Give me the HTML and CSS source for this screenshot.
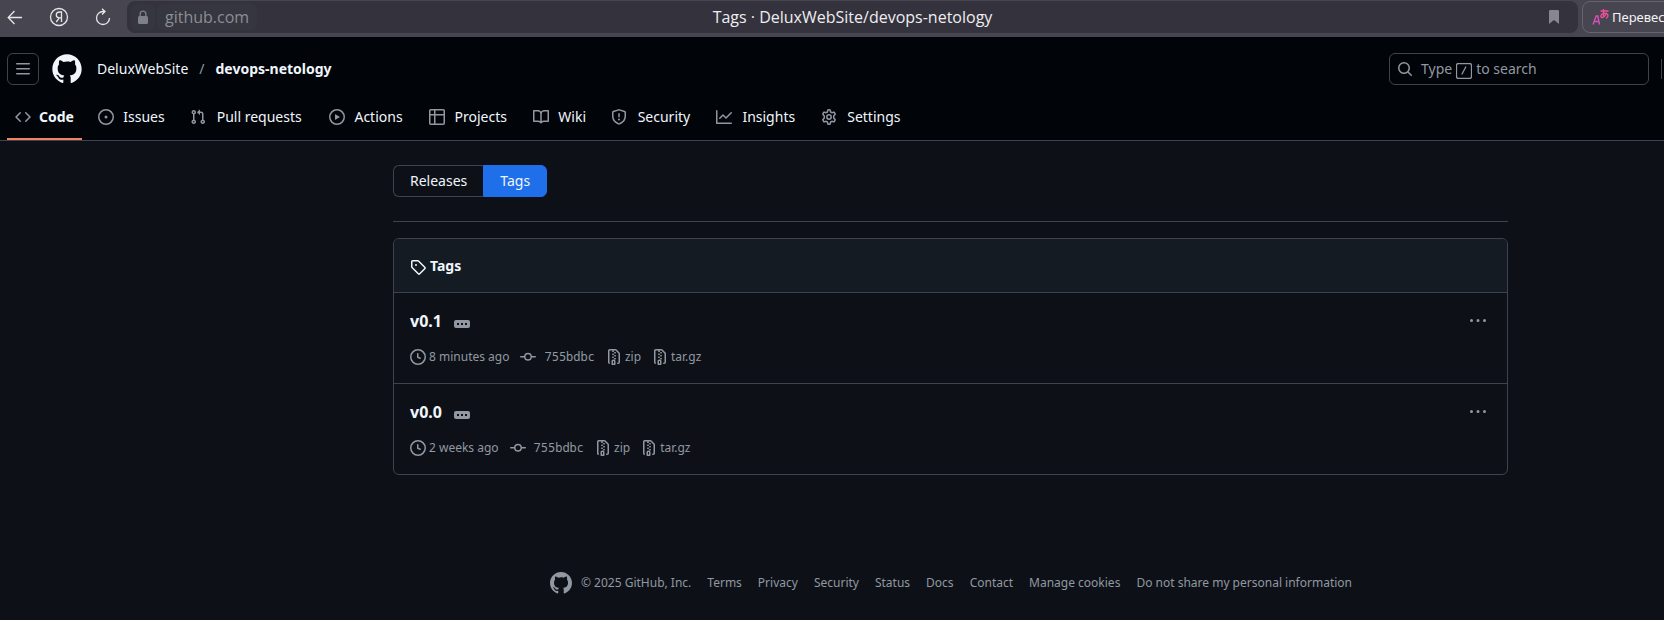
FILE: index.html
```html
<!DOCTYPE html>
<html lang="en">
<head>
<meta charset="utf-8">
<title>Tags · DeluxWebSite/devops-netology</title>
<link rel="stylesheet" href="styles.css">
</head>
<body>
<svg class="sprite" aria-hidden="true">
  <symbol id="mark" viewBox="0 0 24 24"><path d="M12 1C5.923 1 1 5.923 1 12c0 4.867 3.149 8.979 7.521 10.436.55.096.756-.233.756-.522 0-.262-.013-1.128-.013-2.049-2.764.509-3.479-.674-3.699-1.292-.124-.317-.66-1.293-1.127-1.554-.385-.207-.936-.715-.014-.729.866-.014 1.485.797 1.691 1.128.99 1.663 2.571 1.196 3.204.907.096-.715.385-1.196.701-1.471-2.448-.275-5.005-1.224-5.005-5.432 0-1.196.426-2.186 1.128-2.956-.111-.275-.496-1.402.11-2.915 0 0 .921-.288 3.024 1.128a10.193 10.193 0 0 1 2.75-.371c.936 0 1.871.123 2.75.371 2.104-1.43 3.025-1.128 3.025-1.128.605 1.513.221 2.64.111 2.915.701.77 1.127 1.747 1.127 2.956 0 4.222-2.571 5.157-5.019 5.432.399.344.743 1.004.743 2.035 0 1.471-.014 2.654-.014 3.025 0 .289.206.632.756.522C19.851 20.979 23 16.854 23 12c0-6.077-4.922-11-11-11Z"/></symbol>
  <symbol id="dots" viewBox="0 0 16 16"><path d="M8 9a1.5 1.5 0 1 0 0-3 1.5 1.5 0 0 0 0 3ZM1.5 9a1.5 1.5 0 1 0 0-3 1.5 1.5 0 0 0 0 3Zm13 0a1.5 1.5 0 1 0 0-3 1.5 1.5 0 0 0 0 3Z"/></symbol>
  <symbol id="clock" viewBox="0 0 16 16"><path d="M8 0a8 8 0 1 1 0 16A8 8 0 0 1 8 0ZM1.5 8a6.5 6.5 0 1 0 13 0 6.5 6.5 0 0 0-13 0Zm7-3.25v2.992l2.028.812a.75.75 0 0 1-.557 1.392l-2.5-1A.751.751 0 0 1 7 8.25v-3.5a.75.75 0 0 1 1.5 0Z"/></symbol>
  <symbol id="commit" viewBox="0 0 16 16"><path d="M11.93 8.5a4.002 4.002 0 0 1-7.86 0H.75a.75.75 0 0 1 0-1.5h3.32a4.002 4.002 0 0 1 7.86 0h3.32a.75.75 0 0 1 0 1.5Zm-1.43-.75a2.5 2.5 0 1 0-5 0 2.5 2.5 0 0 0 5 0Z"/></symbol>
  <symbol id="zip" viewBox="0 0 16 16"><path d="M3.5 1.75v11.5c0 .09.048.173.126.217a.75.75 0 0 1-.752 1.298A1.748 1.748 0 0 1 2 13.25V1.75C2 .784 2.784 0 3.75 0h5.586c.464 0 .909.185 1.237.513l2.914 2.914c.329.328.513.773.513 1.237v8.586A1.75 1.75 0 0 1 12.25 15h-.5a.75.75 0 0 1 0-1.5h.5a.25.25 0 0 0 .25-.25V4.664a.25.25 0 0 0-.073-.177L9.513 1.573a.25.25 0 0 0-.177-.073H7.25a.75.75 0 0 1 0 1.5h-.5a.75.75 0 0 1 0-1.5h-3a.25.25 0 0 0-.25.25Zm3.75 8.75h.5c.966 0 1.75.784 1.75 1.75v3a.75.75 0 0 1-.75.75h-2.5a.75.75 0 0 1-.75-.75v-3c0-.966.784-1.75 1.75-1.75ZM6 5.25a.75.75 0 0 1 .75-.75h.5a.75.75 0 0 1 0 1.5h-.5A.75.75 0 0 1 6 5.25Zm.75 2.25h.5a.75.75 0 0 1 0 1.5h-.5a.75.75 0 0 1 0-1.5ZM8 6.75A.75.75 0 0 1 8.75 6h.5a.75.75 0 0 1 0 1.5h-.5A.75.75 0 0 1 8 6.75ZM8.75 3h.5a.75.75 0 0 1 0 1.5h-.5a.75.75 0 0 1 0-1.5ZM8 9.75A.75.75 0 0 1 8.75 9h.5a.75.75 0 0 1 0 1.5h-.5A.75.75 0 0 1 8 9.75Zm-1 2.5v2.25h1v-2.25a.25.25 0 0 0-.25-.25h-.5a.25.25 0 0 0-.25.25Z"/></symbol>
</svg>

<div class="browser">
  <button class="nav-btn" aria-label="Back"><svg width="16" height="16" viewBox="0 0 16 16" class="line"><path d="M15 8.500H1.500M7.500 2 1.200 8.500 7.500 15"/></svg></button>
  <button class="nav-btn" aria-label="Yandex"><svg width="20" height="20" viewBox="0 0 20 20" class="line"><circle cx="10" cy="10" r="8.500"/><path d="M12.500 15V5h-2C8.500 5 7.300 6.200 7.300 8s1.200 2.800 3.200 2.800h2M10.300 10.800 7.300 15"/></svg></button>
  <button class="nav-btn" aria-label="Reload"><svg width="18" height="18" viewBox="0 0 18 18" class="line"><path d="M10.500 3.500H9A6.500 6.500 0 1 0 15.500 10M8 .800l3 2.700-3 3"/></svg></button>
  <div class="address">
    <span class="lock"><svg width="12" height="14" viewBox="0 0 12 14"><path d="M2.500 6V4a3.500 3.500 0 0 1 7 0v2h-1.300V4a2.200 2.200 0 0 0-4.400 0v2Z"/><rect x="1" y="6" width="10" height="8" rx="1.500"/></svg></span>
    <span class="host">github.com</span>
    <span class="page-title">Tags · DeluxWebSite/devops-netology</span>
    <button class="bookmark" aria-label="Bookmark"><svg width="10" height="14" viewBox="0 0 10 14"><path d="M0 1.500C0 .500.500 0 1.500 0h7C9.500 0 10 .500 10 1.500V14l-5-4-5 4Z"/></svg></button>
  </div>
  <button class="translate"><svg width="18" height="18" viewBox="0 0 18 18" class="line"><path class="latin" d="M1 16.500 4.200 8h1.600l1.700 8.500M2.200 13.500h4.500"/><path class="kana" d="M8.500 3h8M11.500 1v8M14.500 4.500c-.5 3-3 5-4.500 5-1.800 0-1.700-3.500 2-4 4-.5 5.500 2.500 2 5"/></svg>Перевес</button>
</div>

<header class="header">
  <div class="top">
    <button class="menu" aria-label="Menu"><svg width="16" height="16" viewBox="0 0 16 16"><path d="M1 2.750A.750.750 0 0 1 1.750 2h12.500a.750.750 0 0 1 0 1.500H1.750A.750.750 0 0 1 1 2.750Zm0 5A.750.750 0 0 1 1.750 7h12.500a.750.750 0 0 1 0 1.500H1.750A.750.750 0 0 1 1 7.750ZM1.750 12h12.500a.750.750 0 0 1 0 1.500H1.750a.750.750 0 0 1 0-1.500Z"/></svg></button>
    <a class="home" href="#" aria-label="Home"><svg width="32" height="32"><use href="#mark"/></svg></a>
    <nav class="crumbs"><a href="#">DeluxWebSite</a><span>/</span><a class="strong" href="#">devops-netology</a></nav>
    <button class="search"><svg width="16" height="16" viewBox="0 0 16 16"><path d="M10.680 11.740a6 6 0 0 1-7.922-8.982 6 6 0 0 1 8.982 7.922l3.040 3.040a.749.749 0 0 1-.326 1.275.749.749 0 0 1-.734-.215ZM11.500 7a4.499 4.499 0 1 0-8.997 0A4.499 4.499 0 0 0 11.500 7Z"/></svg><span>Type</span><kbd><svg width="16" height="16" viewBox="0 0 16 16" class="line"><rect x=".5" y=".5" width="15" height="15" rx="2"/><path d="m5.800 11.500 4.200-8"/></svg></kbd><span>to search</span></button>
    <span class="divider"></span>
  </div>
  <nav class="tabs">
    <a class="tab current" href="#"><svg width="16" height="16" viewBox="0 0 16 16"><path d="m11.280 3.220 4.250 4.250a.750.750 0 0 1 0 1.060l-4.250 4.250a.749.749 0 0 1-1.275-.326.749.749 0 0 1 .215-.734L13.940 8l-3.720-3.720a.749.749 0 0 1 .326-1.275.749.749 0 0 1 .734.215Zm-6.560 0a.751.751 0 0 1 1.042.018.751.751 0 0 1 .018 1.042L2.060 8l3.720 3.720a.749.749 0 0 1-.326 1.275.749.749 0 0 1-.734-.215L.470 8.530a.750.750 0 0 1 0-1.060Z"/></svg><span data-label="Code">Code</span></a>
    <a class="tab" href="#"><svg width="16" height="16" viewBox="0 0 16 16"><path d="M8 9.500a1.500 1.500 0 1 0 0-3 1.500 1.500 0 0 0 0 3Z"/><path d="M8 0a8 8 0 1 1 0 16A8 8 0 0 1 8 0ZM1.500 8a6.500 6.500 0 1 0 13 0 6.500 6.500 0 0 0-13 0Z"/></svg><span data-label="Issues">Issues</span></a>
    <a class="tab" href="#"><svg width="16" height="16" viewBox="0 0 16 16"><path d="M1.500 3.250a2.250 2.250 0 1 1 3 2.122v5.256a2.251 2.251 0 1 1-1.500 0V5.372A2.250 2.250 0 0 1 1.500 3.250Zm5.677-.177L9.573.677A.250.250 0 0 1 10 .854V2.500h1A2.500 2.500 0 0 1 13.500 5v5.628a2.251 2.251 0 1 1-1.500 0V5a1 1 0 0 0-1-1h-1v1.646a.250.250 0 0 1-.427.177L7.177 3.427a.250.250 0 0 1 0-.354ZM3.750 2.500a.750.750 0 1 0 0 1.500.750.750 0 0 0 0-1.500Zm0 9.500a.750.750 0 1 0 0 1.500.750.750 0 0 0 0-1.500Zm8.250.750a.750.750 0 1 0 1.500 0 .750.750 0 0 0-1.500 0Z"/></svg><span data-label="Pull requests">Pull requests</span></a>
    <a class="tab" href="#"><svg width="16" height="16" viewBox="0 0 16 16"><path d="M8 0a8 8 0 1 1 0 16A8 8 0 0 1 8 0ZM1.500 8a6.500 6.500 0 1 0 13 0 6.500 6.500 0 0 0-13 0Zm4.879-2.773 4.264 2.559a.250.250 0 0 1 0 .428l-4.264 2.559A.250.250 0 0 1 6 10.559V5.442a.250.250 0 0 1 .379-.215Z"/></svg><span data-label="Actions">Actions</span></a>
    <a class="tab" href="#"><svg width="16" height="16" viewBox="0 0 16 16"><path d="M0 1.750C0 .784.784 0 1.750 0h12.500C15.216 0 16 .784 16 1.750v12.500A1.750 1.750 0 0 1 14.250 16H1.750A1.750 1.750 0 0 1 0 14.250ZM6.500 6.500v8h7.750a.250.250 0 0 0 .250-.250V6.500Zm8-1.500V1.750a.250.250 0 0 0-.250-.250H6.500V5Zm-13 1.500v7.750c0 .138.112.250.250.250H5v-8ZM5 5V1.500H1.750a.250.250 0 0 0-.250.250V5Z"/></svg><span data-label="Projects">Projects</span></a>
    <a class="tab" href="#"><svg width="16" height="16" viewBox="0 0 16 16"><path d="M0 1.750A.750.750 0 0 1 .750 1h4.253c1.227 0 2.317.590 3 1.501A3.743 3.743 0 0 1 11.006 1h4.245a.750.750 0 0 1 .750.750v10.500a.750.750 0 0 1-.750.750h-4.507a2.250 2.250 0 0 0-1.591.659l-.622.621a.750.750 0 0 1-1.060 0l-.622-.621A2.250 2.250 0 0 0 5.258 13H.750a.750.750 0 0 1-.750-.750Zm7.251 10.324.004-5.073-.002-2.253A2.250 2.250 0 0 0 5.003 2.500H1.500v9h3.757a3.750 3.750 0 0 1 1.994.574ZM8.755 4.750l-.004 7.322a3.752 3.752 0 0 1 1.992-.572H14.500v-9h-3.495a2.250 2.250 0 0 0-2.250 2.250Z"/></svg><span data-label="Wiki">Wiki</span></a>
    <a class="tab" href="#"><svg width="16" height="16" viewBox="0 0 16 16"><path d="M7.467.133a1.748 1.748 0 0 1 1.066 0l5.250 1.680A1.750 1.750 0 0 1 15 3.480V7c0 1.566-.320 3.182-1.303 4.682-.983 1.498-2.585 2.813-5.032 3.855a1.697 1.697 0 0 1-1.330 0c-2.447-1.042-4.049-2.357-5.032-3.855C1.320 10.182 1 8.566 1 7V3.480a1.755 1.755 0 0 1 1.217-1.667Zm.610 1.429a.250.250 0 0 0-.153 0l-5.250 1.680a.250.250 0 0 0-.174.238V7c0 1.358.275 2.666 1.057 3.860.784 1.194 2.121 2.340 4.366 3.297a.196.196 0 0 0 .154 0c2.245-.956 3.582-2.104 4.366-3.298C13.225 9.666 13.500 8.360 13.500 7V3.480a.251.251 0 0 0-.174-.237l-5.250-1.680ZM8.750 4.750v3a.750.750 0 0 1-1.500 0v-3a.750.750 0 0 1 1.500 0ZM9 10.500a1 1 0 1 1-2 0 1 1 0 0 1 2 0Z"/></svg><span data-label="Security">Security</span></a>
    <a class="tab" href="#"><svg width="16" height="16" viewBox="0 0 16 16"><path d="M1.500 1.750V13.500h13.750a.750.750 0 0 1 0 1.500H.750a.750.750 0 0 1-.750-.750V1.750a.750.750 0 0 1 1.500 0Zm14.280 2.530-5.250 5.250a.750.750 0 0 1-1.060 0L7 7.060 4.280 9.780a.751.751 0 0 1-1.042-.018.751.751 0 0 1-.018-1.042l3.250-3.250a.750.750 0 0 1 1.060 0L10 7.940l4.720-4.720a.751.751 0 0 1 1.042.018.751.751 0 0 1 .018 1.042Z"/></svg><span data-label="Insights">Insights</span></a>
    <a class="tab" href="#"><svg class="line gear" width="16" height="16" viewBox="0 0 16 16"><path d="M6.900.900Q8 .600 9.100.900L9.600 3 10.900 3.700 12.900 3.100Q13.800 4 14.200 5.200L12.700 6.900V9.100L14.200 10.800Q13.800 12 12.900 12.900L10.900 12.300 9.600 13 9.100 15.100Q8 15.400 6.900 15.100L6.400 13 5.100 12.300 3.100 12.900Q2.200 12 1.800 10.800L3.300 9.100V6.900L1.800 5.200Q2.200 4 3.100 3.100L5.100 3.700 6.400 3Z"/><circle cx="8" cy="8" r="2.200"/></svg><span data-label="Settings">Settings</span></a>
  </nav>
</header>

<main class="content">
  <nav class="subnav"><a href="#">Releases</a><a class="selected" href="#">Tags</a></nav>
  <section class="box">
    <h2 class="box-head"><svg width="16" height="16" viewBox="0 0 16 16"><path d="M1 7.775V2.750C1 1.784 1.784 1 2.750 1h5.025c.464 0 .910.184 1.238.513l6.250 6.250a1.750 1.750 0 0 1 0 2.474l-5.026 5.026a1.750 1.750 0 0 1-2.474 0l-6.250-6.250A1.752 1.752 0 0 1 1 7.775Zm1.500 0c0 .066.026.130.073.177l6.250 6.250a.250.250 0 0 0 .354 0l5.025-5.025a.250.250 0 0 0 0-.354l-6.250-6.250a.250.250 0 0 0-.177-.073H2.750a.250.250 0 0 0-.250.250ZM6 5a1 1 0 1 1 0 2 1 1 0 0 1 0-2Z"/></svg>Tags</h2>
    <article class="row">
      <div class="row-title"><h3><a href="#">v0.1</a></h3><button class="expander" aria-label="Show message"><i></i><i></i><i></i></button><button class="kebab" aria-label="Options"><svg width="16" height="16"><use href="#dots"/></svg></button></div>
      <ul class="meta">
        <li><svg width="16" height="16"><use href="#clock"/></svg>8 minutes ago</li>
        <li class="hash"><a href="#"><svg width="16" height="16"><use href="#commit"/></svg>755bdbc</a></li>
        <li><a href="#"><svg width="16" height="16"><use href="#zip"/></svg>zip</a></li>
        <li><a href="#"><svg width="16" height="16"><use href="#zip"/></svg>tar.gz</a></li>
      </ul>
    </article>
    <article class="row">
      <div class="row-title"><h3><a href="#">v0.0</a></h3><button class="expander" aria-label="Show message"><i></i><i></i><i></i></button><button class="kebab" aria-label="Options"><svg width="16" height="16"><use href="#dots"/></svg></button></div>
      <ul class="meta">
        <li><svg width="16" height="16"><use href="#clock"/></svg>2 weeks ago</li>
        <li class="hash"><a href="#"><svg width="16" height="16"><use href="#commit"/></svg>755bdbc</a></li>
        <li><a href="#"><svg width="16" height="16"><use href="#zip"/></svg>zip</a></li>
        <li><a href="#"><svg width="16" height="16"><use href="#zip"/></svg>tar.gz</a></li>
      </ul>
    </article>
  </section>
</main>

<footer class="footer">
  <span class="copy"><svg width="24" height="24"><use href="#mark"/></svg>© 2025 GitHub, Inc.</span>
  <a href="#">Terms</a><a href="#">Privacy</a><a href="#">Security</a><a href="#">Status</a><a href="#">Docs</a><a href="#">Contact</a>
  <button>Manage cookies</button><button>Do not share my personal information</button>
</footer>
</body>
</html>
```

FILE: styles.css
```css
* { box-sizing: border-box; }

body {
  margin: 0;
  background: #0d1117;
  color: #f0f6fc;
  font: 14px/20px "Noto Sans", sans-serif;
  overflow-x: hidden;
}

.sprite { display: none; }
svg { flex: none; fill: currentColor; }
svg.line { fill: none; stroke: currentColor; stroke-width: 1.3; }
a { color: inherit; text-decoration: none; }
button { border: 0; padding: 0; background: none; color: inherit; font: inherit; cursor: pointer; }

/* Browser toolbar */
.browser {
  display: flex;
  align-items: center;
  height: 37px;
  padding-bottom: 3px;
  background: #474650;
  overflow: hidden;
}
.nav-btn { display: flex; flex: none; justify-content: center; width: 44px; color: #e6e6e8; }
.nav-btn:first-child { width: 30px; margin-right: 7px; }
.address {
  position: relative;
  display: flex;
  flex: 1;
  align-items: center;
  gap: 2px;
  height: 32px;
  margin-left: 2px;
  padding: 0 19px 0 4px;
  border-radius: 8px;
  background: #33323d;
  font-family: "Open Sans", sans-serif;
  font-size: 16px;
}
.lock, .host { display: flex; align-items: center; height: 26px; border-radius: 6px; background: #363640; }
.lock { justify-content: center; width: 24px; color: #7e8288; }
.host { padding: 0 8px; color: #8d8d94; }
.page-title { position: absolute; left: 0; right: 0; text-align: center; color: #eeeeef; pointer-events: none; }
.bookmark { display: flex; margin-left: auto; color: #88878d; }
.translate {
  display: flex;
  flex: none;
  align-items: center;
  gap: 2px;
  width: 96px;
  height: 32px;
  margin: 0 -14px 0 4px;
  padding-left: 9px;
  border: 1px solid #66656f;
  border-radius: 8px;
  color: #f4f4f5;
  font-size: 13px;
}
.latin { stroke: #dc50c0; }
.kana { stroke: #f0509c; }

/* Site header */
.header { background: #010409; border-bottom: 1px solid #3d444d; }
.top { display: flex; align-items: center; height: 64px; padding-left: 7px; }
.menu {
  display: flex;
  align-items: center;
  justify-content: center;
  width: 32px;
  height: 32px;
  border: 1px solid #3d444d;
  border-radius: 6px;
  color: #9198a1;
}
.home { display: flex; margin: 0 14px 0 12px; }
.crumbs { display: flex; gap: 11px; }
.crumbs span { color: #9198a1; }
.strong { font-weight: 700; }
.search {
  display: flex;
  align-items: center;
  width: 260px;
  height: 32px;
  margin-left: auto;
  padding: 0 7px;
  border: 1px solid #3d444d;
  border-radius: 6px;
  color: #9198a1;
}
.search > svg { margin-right: 8px; }
kbd { display: flex; margin: 3px 4px 0; }
.divider { width: 1px; height: 20px; margin: 0 2px 0 12px; background: #3d444d; }

.tabs { display: flex; gap: 8px; height: 39px; padding-left: 7px; }
.tab { display: flex; gap: 8px; height: 39px; padding: 6px 8px 0; }
.tab svg { margin-top: 2px; color: #9198a1; }
.tab .gear { stroke-width: 1.5; stroke-linejoin: round; }
.tab span { display: grid; justify-items: center; align-content: start; }
/* Reserves the bold width so that tabs keep their place when selected */
.tab span::after { content: attr(data-label); height: 0; overflow: hidden; visibility: hidden; font-weight: 700; }
.current { border-bottom: 2px solid #f78166; font-weight: 700; }

/* Tag list */
.content { margin: 0 156px 0 393px; padding-top: 24px; }
.subnav { display: flex; padding-bottom: 24px; margin-bottom: 16px; border-bottom: 1px solid #3d444d; }
.subnav a { padding: 5px 16px; border: 1px solid #3d444d; border-radius: 6px 0 0 6px; }
.subnav .selected { border-color: #1f6feb; border-radius: 0 6px 6px 0; background: #1f6feb; }
.subnav a:first-child { border-right: 0; }
.box { border: 1px solid #3d444d; border-radius: 6px; overflow: hidden; }
.box-head {
  display: flex;
  align-items: center;
  gap: 4px;
  margin: 0;
  padding: 17px 16px 16px;
  background: #151b23;
  font-size: 14px;
  font-weight: 700;
  line-height: 20px;
}
.box-head svg { margin-top: 2px; }
.row { padding: 16px 16px 12px; border-top: 1px solid #3d444d; }
.row-title { display: flex; align-items: center; margin-bottom: 10px; }
.row-title h3 { margin: 0 12px 0 0; font-size: 16px; font-weight: 700; line-height: 24px; }
.expander {
  display: flex;
  align-items: center;
  justify-content: center;
  gap: 2px;
  width: 16px;
  height: 8px;
  margin-top: 5px;
  border-radius: 2px;
  background: #9198a1;
}
.expander i { width: 2px; height: 2px; background: #0d1117; }
.kebab { display: flex; margin: 0 5px 0 auto; color: #9198a1; }
.meta { display: flex; gap: 11px; margin: 0; padding: 4px 0; list-style: none; color: #9198a1; font-size: 12px; }
.meta li, .meta a { display: flex; align-items: center; gap: 3px; line-height: 20px; }
.meta .hash a { gap: 8px; font-family: "Noto Sans Mono", "DejaVu Sans Mono", monospace; }

/* Footer */
.footer {
  display: flex;
  align-items: center;
  justify-content: center;
  gap: 16px;
  padding: 96px 16px 20px 253px;
  color: #9198a1;
  font-size: 12px;
}
.copy { display: flex; align-items: center; gap: 8px; }
```
